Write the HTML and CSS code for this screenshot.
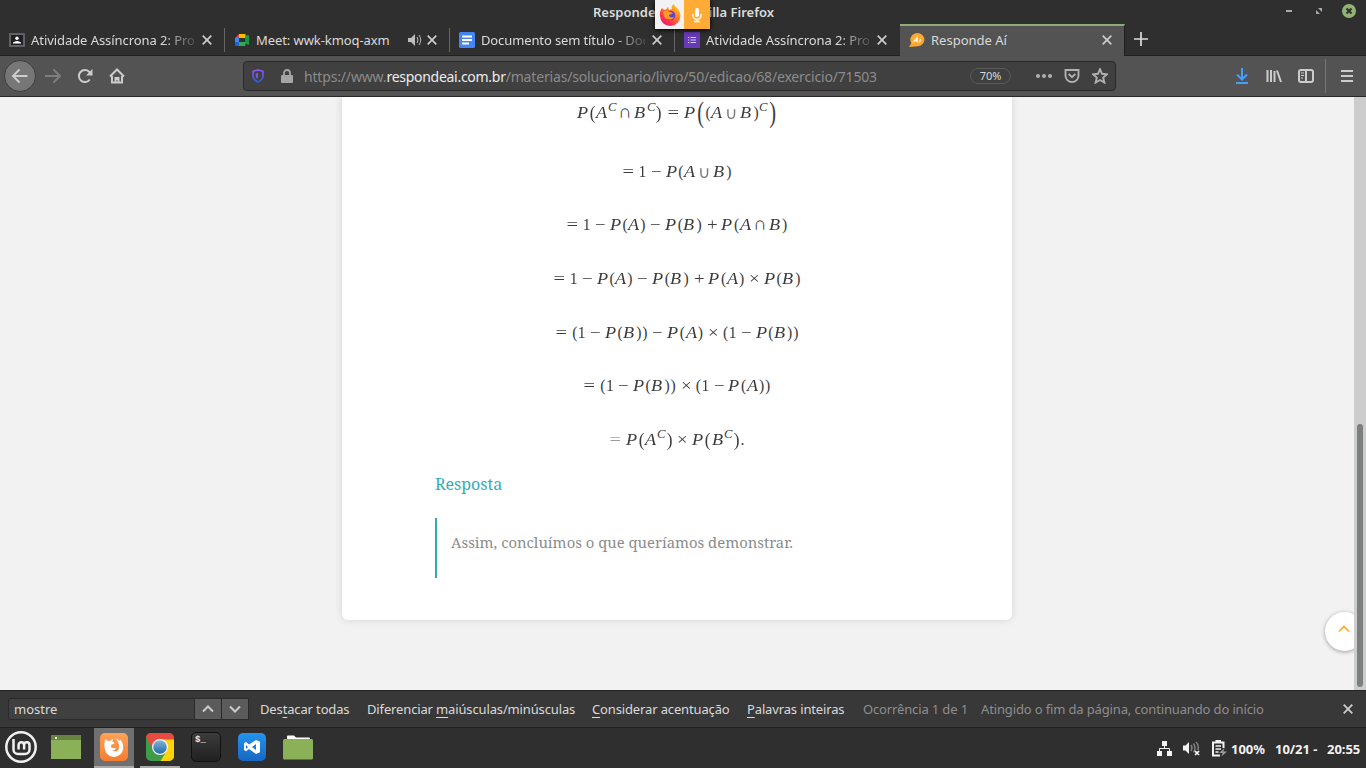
FILE: index.html
```html
<!DOCTYPE html>
<html lang="pt-BR">
<head>
<meta charset="utf-8">
<title>Responde Aí - Mozilla Firefox</title>
<link rel="stylesheet" href="styles.css">
</head>
<body>
<header class="titlebar">
  <span class="title">Responde Aí - Mozilla Firefox</span>
  <div class="sharing">
    <span class="share-fx"><svg width="22" height="22" viewBox="0 0 22 22"><defs><linearGradient id="fx" x1="1" y1="0" x2="0.2" y2="1"><stop offset="0" stop-color="#ffe62e"/><stop offset=".4" stop-color="#ff8a22"/><stop offset=".75" stop-color="#ff3647"/><stop offset="1" stop-color="#e31587"/></linearGradient></defs><path d="M3 4l2 2 2-.4L9 3l1 3 3-1c-1-2 0-4 2-5 0 3 6 4 6.500 11.500A10 10 0 0 1 1 12C.5 9 1.500 6 3 4z" fill="url(#fx)"/><circle cx="11.500" cy="11.500" r="4.800" fill="#6542c8"/><path d="M4 8c3-2 5-1 7 0l3 1c-1 1.500-3 1-4 2 0 2 2 3 5 2-2 4-9 3-10-1z" fill="#ff9b22"/></svg></span>
    <span class="share-mic"><svg width="10" height="16" viewBox="0 0 10 16"><rect x="3" y="1" width="4" height="9" rx="2" fill="#fff"/><path d="M1 7v1.500a4 4 0 0 0 8 0V7M5 12v2.500M2 14.500h6" fill="none" stroke="#fff" stroke-width="1.400"/></svg></span>
  </div>
  <div class="winctl">
    <svg width="8" height="16" viewBox="0 0 8 16"><path d="M1 8h6" stroke="#aaa" stroke-width="2"/></svg>
    <svg width="8" height="16" viewBox="0 0 8 16"><path d="M3 5h4v4zM1 7v4h4z" fill="#aaa"/></svg>
    <svg width="14" height="16" viewBox="0 0 14 16"><circle cx="7" cy="8" r="7" fill="#92b372"/><path d="M4.500 5.500l5 5M9.500 5.500l-5 5" stroke="#2f2f2f" stroke-width="2"/></svg>
  </div>
</header>

<nav class="tabs">
  <div class="tab"><svg class="fav" viewBox="0 0 16 16"><rect y="1" width="16" height="14" rx="1" fill="#5f6368"/><rect x="2" y="3" width="12" height="10" fill="#202124"/><circle cx="8" cy="6.300" r="1.700" fill="#fff"/><path d="M4 11.500V10.500Q8 7.500 12 10.500V11.500z" fill="#fff"/></svg><span class="tabtext fade t1">Atividade Assíncrona 2: Pro</span><svg class="close" viewBox="0 0 10 10"><path d="M.7.7l8.600 8.600M9.300.7L.7 9.300"/></svg></div>
  <div class="tab"><svg class="fav" viewBox="0 0 16 16"><path d="M1 6l4-4v4z" fill="#ea4335"/><path d="M5 2h6.500v4H5z" fill="#fbbc04"/><path d="M1 6h4v4H1z" fill="#4285f4"/><path d="M1 10h4v4H2q-1 0-1-1z" fill="#1967d2"/><path d="M5 10h6.500V4l3-1v10l-3-2v2.500L11 14H5z" fill="#34a853"/><path d="M11.500 6L15 3v10l-3.500-3z" fill="#0f9d43"/></svg><span class="tabtext meet">Meet: wwk-kmoq-axm</span><svg class="sound" viewBox="0 0 14 14"><path d="M0 5h3l4-4v12L3 9H0z" fill="#bcbcbc"/><path d="M9 4q2 3 0 6M11 2q3.500 5 0 10" fill="none" stroke="#bcbcbc"/></svg><svg class="close" viewBox="0 0 10 10"><path d="M.7.7l8.600 8.600M9.300.7L.7 9.300"/></svg></div>
  <div class="tab"><svg class="fav" viewBox="0 0 16 16"><rect width="16" height="16" rx="1.500" fill="#4285f4"/><path d="M3 4.500h10M3 8h10M3 11.500h7" stroke="#fff" stroke-width="2"/></svg><span class="tabtext fade t3">Documento sem título - Doc</span><svg class="close" viewBox="0 0 10 10"><path d="M.7.7l8.600 8.600M9.300.7L.7 9.300"/></svg></div>
  <div class="tab"><svg class="fav" viewBox="0 0 16 16"><rect width="16" height="16" fill="#673ab7"/><path d="M6.500 5.500H12M6.500 8H12M6.500 10.500H12M4 5.500h1.300M4 8h1.300M4 10.500h1.300" stroke="#d5c8ee"/></svg><span class="tabtext fade t1">Atividade Assíncrona 2: Pro</span><svg class="close" viewBox="0 0 10 10"><path d="M.7.7l8.600 8.600M9.300.7L.7 9.300"/></svg></div>
  <div class="tab active"><svg class="fav" viewBox="0 0 16 16"><path d="M0 15L2.300 11A7 6.700 0 1 1 9 14.300z" fill="#ffa62f"/><path d="M4 10.500L8 5.500 8.500 10.500M6 8.700h2.500M10.500 10.500l1-3.500" fill="none" stroke="#fff" stroke-width="1.200"/></svg><span class="tabtext t5">Responde Aí</span><svg class="close" viewBox="0 0 10 10"><path d="M.7.7l8.600 8.600M9.300.7L.7 9.300"/></svg></div>
  <svg class="newtab" viewBox="0 0 14 14"><path d="M7 0v14M0 7h14" stroke="#ddd" stroke-width="1.700"/></svg>
</nav>

<div class="toolbar">
  <span class="back"><svg width="18" height="18" viewBox="0 0 18 18"><path d="M16.500 9H2.500M8.500 2.500L2 9l6.500 6.500" class="ln"/></svg></span>
  <svg class="ti dim" viewBox="0 0 16 16"><path d="M0 8h14.500M8.500 1.500L15 8l-6.500 6.500" class="ln"/></svg>
  <svg class="ti" viewBox="0 0 16 16"><path d="M12.800 11.500A6 6 0 1 1 12.200 3.800L14 6" class="ln"/><path d="M15.500 1v6.500H9z" fill="#ccc"/></svg>
  <svg class="ti" viewBox="0 0 16 16"><path d="M1 8.500l7-7 7 7M3 8v6.500h10V8" class="ln"/><path d="M5.500 15V9h5v6h-2v-3h-1v3z" fill="#ccc"/></svg>
  <div class="urlbar">
    <svg class="shield" viewBox="0 0 12 14"><path d="M6 1L11 2.300V7q-.3 4-5 6Q1.300 11 1 7V2.300z" fill="none" stroke="url(#sh)" stroke-width="1.600"/><path d="M6 3.800V10Q3.600 9 3.600 7V4.400z" fill="#7356e8"/><defs><linearGradient id="sh" x2="0" y2="1"><stop stop-color="#9059ff"/><stop offset="1" stop-color="#2a5bd7"/></linearGradient></defs></svg>
    <i class="vsep"></i>
    <svg class="lock" viewBox="0 0 12 14"><path d="M3 7V4a3 3 0 0 1 6 0v3" fill="none" stroke="#a5a5a5" stroke-width="1.800"/><rect y="6" width="12" height="8" rx="1" fill="#a5a5a5"/></svg>
    <span class="url">https://www.<b>respondeai.com.br</b>/materias/solucionario/livro/50/edicao/68/exercicio/71503</span>
    <span class="zoom">70%</span>
    <i class="vsep s2"></i>
    <svg class="dots" viewBox="0 0 16 4"><circle cx="2" cy="2" r="2"/><circle cx="8" cy="2" r="2"/><circle cx="14" cy="2" r="2"/></svg>
    <svg class="ui" viewBox="0 0 16 16"><path d="M1.500 2h13v5.500a6.500 6.500 0 0 1-13 0z"/><path d="M4.700 6L8 9.200 11.300 6"/></svg>
    <svg class="ui" viewBox="0 0 16 16"><path d="M8 1.200l2 4.600 5 .5-3.800 3.300 1.200 5L8 12l-4.400 2.600 1.200-5L1 6.300l5-.5z"/></svg>
  </div>
  <svg class="ti dl" viewBox="0 0 16 16"><path d="M8 0v11M3 6.500L8 11.500l5-5M2 15h12" fill="none" stroke="#459dff" stroke-width="2"/></svg>
  <svg class="ti lib" viewBox="0 0 16 16"><path d="M1.500 2v12M5 2v12M8.500 3v11M11 2.500L15 14" class="ln"/></svg>
  <svg class="ti side" viewBox="0 0 16 16"><rect x="1" y="2" width="14" height="12" rx="2" class="ln"/><path d="M8 2v12" class="ln"/><path d="M3 5h3M3 7.500h3M3 10h2" stroke="#ccc"/></svg>
  <i class="tsep"></i>
  <svg class="menu" viewBox="0 0 12 12"><path d="M0 1h12M0 6h12M0 11h12" class="ln"/></svg>
</div>

<main class="page">
  <section class="card">
    <div class="eq first"><i class="p">P</i><s class="big">(</s><i class="a">A</i><sup>C</sup><u>∩</u><i class="b">B</i><sup>C</sup><s class="big">)</s><em>=</em><i class="p">P</i><s class="huge">(</s><s>(</s><i class="a">A</i><u class="cup">∪</u><i class="b">B</i><s>)</s><sup>C</sup><s class="huge">)</s></div>
    <div class="eq"><em class="l">=</em><q>1</q><b>−</b><i class="p">P</i><s>(</s><i class="a">A</i><u class="cup">∪</u><i class="b">B</i><s>)</s></div>
    <div class="eq"><em class="l">=</em><q>1</q><b>−</b><i class="p">P</i><s>(</s><i class="a">A</i><s>)</s><b>−</b><i class="p">P</i><s>(</s><i class="b">B</i><s>)</s><b>+</b><i class="p">P</i><s>(</s><i class="a">A</i><u>∩</u><i class="b">B</i><s>)</s></div>
    <div class="eq"><em class="l">=</em><q>1</q><b>−</b><i class="p">P</i><s>(</s><i class="a">A</i><s>)</s><b>−</b><i class="p">P</i><s>(</s><i class="b">B</i><s>)</s><b>+</b><i class="p">P</i><s>(</s><i class="a">A</i><s>)</s><b>×</b><i class="p">P</i><s>(</s><i class="b">B</i><s>)</s></div>
    <div class="eq"><em class="l">=</em><s>(</s><q>1</q><b>−</b><i class="p">P</i><s>(</s><i class="b">B</i><s>)</s><s>)</s><b>−</b><i class="p">P</i><s>(</s><i class="a">A</i><s>)</s><b>×</b><s>(</s><q>1</q><b>−</b><i class="p">P</i><s>(</s><i class="b">B</i><s>)</s><s>)</s></div>
    <div class="eq"><em class="l">=</em><s>(</s><q>1</q><b>−</b><i class="p">P</i><s>(</s><i class="b">B</i><s>)</s><s>)</s><b>×</b><s>(</s><q>1</q><b>−</b><i class="p">P</i><s>(</s><i class="a">A</i><s>)</s><s>)</s></div>
    <div class="eq"><em class="l pale">=</em><i class="p">P</i><s class="big">(</s><i class="a">A</i><sup>C</sup><s class="big">)</s><b>×</b><i class="p">P</i><s class="big">(</s><i class="b">B</i><sup>C</sup><s class="big">)</s><span class="dot">.</span></div>
    <h2 class="answer">Resposta</h2>
    <p class="quote"><span>Assim, concluímos o que queríamos demonstrar.</span></p>
  </section>
  <div class="totop"><svg width="12" height="8" viewBox="0 0 12 8"><path d="M1 6.500l5-5 5 5" fill="none" stroke="#ffa52d" stroke-width="1.700"/></svg></div>
  <div class="scroll"><div class="thumb"></div></div>
</main>

<div class="findbar">
  <div class="field">mostre</div>
  <span class="fb"><svg width="12" height="8" viewBox="0 0 12 8"><path d="M1 6.500l5-5 5 5" class="ln"/></svg></span>
  <span class="fb"><svg width="12" height="8" viewBox="0 0 12 8"><path d="M1 1.500l5 5 5-5" class="ln"/></svg></span>
  <span class="f f1">Des<u>t</u>acar todas</span>
  <span class="f f2">Diferenciar <u>m</u>aiúsculas/minúsculas</span>
  <span class="f f3"><u>C</u>onsiderar acentuação</span>
  <span class="f f4"><u>P</u>alavras inteiras</span>
  <span class="f f5">Ocorrência 1 de 1</span>
  <span class="f f6">Atingido o fim da página, continuando do início</span>
  <svg class="close fclose" viewBox="0 0 10 10"><path d="M.7.7l8.600 8.600M9.300.7L.7 9.300"/></svg>
</div>

<footer class="panel">
  <div class="slot mint"><svg width="32" height="32" viewBox="0 0 32 32"><circle cx="16" cy="16" r="14.700" fill="none" stroke="#f1f1f1" stroke-width="2.500"/><path d="M8.500 8v10.500a4.500 4.500 0 0 0 4.500 4.500h7a4.500 4.500 0 0 0 4.500-4.500V14a2.700 2.700 0 0 0-5.400 0v4.500M19 14a2.700 2.700 0 0 0-5.400 0v4.500" fill="none" stroke="#f1f1f1" stroke-width="2.500"/></svg></div>
  <div class="slot files"><svg width="30" height="24" viewBox="0 0 30 24"><path d="M0 0h30v24H0z" fill="#8bb158"/><path d="M0 0h30v5H0z" fill="#668340"/><path d="M4 2h2v2H4z" fill="#fff"/></svg></div>
  <div class="slot on run"><svg width="30" height="30" viewBox="0 0 30 30"><defs><linearGradient id="or" x2="0" y2="1"><stop stop-color="#fba35a"/><stop offset="1" stop-color="#f57d31"/></linearGradient></defs><rect x="1" y="1" width="28" height="28" rx="5" fill="url(#or)"/><path d="M6.500 7l2.300 2 2.700-.3 2.300-2-.3 3 2.200 1.600-3.200 1.500-.7 2.200q2 1.800 4.700.8c.5 2-1.500 3-3.500 2.600 3 2 6.500.8 7-3 .4-3.500-.8-6.500-3.500-8.900q3 .7 4.500 3l.2-2q3.500 4 3 9A9.200 9.200 0 0 1 6 17.500Q4.500 12 6.500 7z" fill="#fff"/></svg></div>
  <div class="slot run"><svg width="30" height="30" viewBox="0 0 30 30"><defs><clipPath id="cc"><rect x="1" y="1" width="28" height="28" rx="5"/></clipPath><linearGradient id="bl" x2="0" y2="1"><stop stop-color="#82b4dc"/><stop offset="1" stop-color="#246ba8"/></linearGradient></defs><g clip-path="url(#cc)"><path d="M0 0h30v30H0z" fill="#3f9c47"/><path d="M15 7h15v23H15l6-10z" fill="#fdd20b"/><path d="M0 0h30v7.500H15L8.500 18 1 5z" fill="#e74a40"/></g><circle cx="15" cy="15" r="8" fill="#f5f5f5"/><circle cx="15" cy="15" r="6.800" fill="url(#bl)"/></svg></div>
  <div class="slot"><div class="term">$_</div></div>
  <div class="slot"><svg width="30" height="30" viewBox="0 0 30 30"><defs><linearGradient id="vs" x2="0" y2="1"><stop stop-color="#2494ef"/><stop offset="1" stop-color="#1667c2"/></linearGradient></defs><rect x="1" y="1" width="28" height="28" rx="5" fill="url(#vs)"/><path d="M19 8l4 1.700v10.600L19 22l-7-5-3 2.300-2-1.200V11l2-1 3 2.500zM19 12l-4 3 4 3zM9 13v4l2-2z" fill="#fff" fill-rule="evenodd"/></svg></div>
  <div class="slot folder"><svg width="30" height="25" viewBox="0 0 30 25"><path d="M4 4V1.500Q4 .5 5 .5h6l2 2h13q1 0 1 1V5H4z" fill="#fff"/><rect y="4" width="30" height="20.500" rx="1.500" fill="#8bb158"/></svg></div>
  <div class="tray">
    <svg class="net" width="15" height="15" viewBox="0 0 15 15"><path d="M5 0h5v5H5zM0 10h5v5H0zM10 10h5v5h-5z" fill="#f2f2f2"/><path d="M7.500 5v2.500M2.500 10V7.500h10V10" fill="none" stroke="#f2f2f2"/></svg>
    <svg class="vol" width="17" height="15" viewBox="0 0 17 15"><path d="M0 4.500h2.500L6 1v12L2.500 9.500H0z" fill="#f2f2f2"/><path d="M8 4q2 3 0 6M10.500 2.500q3 4.500 0 9M13 1q3 3 2 8" fill="none" stroke="#808080" stroke-width="1.500"/><path d="M12 10l4 4M16 10l-4 4" stroke="#fff" stroke-width="1.700"/></svg>
    <svg class="bat" width="15" height="17" viewBox="0 0 15 17"><path d="M8 15.500H1v-13h10.500V8M3.500 1h5.500" fill="none" stroke="#f2f2f2" stroke-width="2"/><path d="M3.500 6h5.500M3.500 9h5.500M3.500 12h3" stroke="#f2f2f2" stroke-width="1.500"/><path d="M12.500 8l-1 3.500H15l-5.500 5 1-3.500H7z" fill="#999"/></svg>
    <span class="pct">100%</span><span class="date">10/21 -</span><span class="clock">20:55</span>
  </div>
</footer>
</body>
</html>
```
FILE: styles.css
```css
* { box-sizing: border-box; }
body { margin: 0; width: 1366px; height: 768px; overflow: hidden; display: flex; flex-direction: column; background: #2f2f2f; font-family: "Noto Sans", "Open Sans", sans-serif; font-size: 13px; color: #dadada; }
svg { display: block; flex: none; }
span { white-space: nowrap; }
.ln { fill: none; stroke: #ccc; stroke-width: 2; }

.titlebar { height: 24px; flex: none; position: relative; display: flex; justify-content: center; padding-left: 1px; }
.title { font-weight: 600; line-height: 24px; letter-spacing: 0; color: #dcdcdc; }
.sharing { position: absolute; left: 655px; top: 0; z-index: 2; display: flex; height: 29px; box-shadow: 0 1px 5px #000; }
.share-fx, .share-mic { display: flex; align-items: center; justify-content: center; }
.share-fx { width: 29px; background: #f2f2f2; }
.share-mic { width: 26px; background: #ffab35; }
.winctl { position: absolute; right: 10px; top: 3px; display: flex; }
.winctl svg + svg { margin-left: 22px; }
.winctl svg + svg + svg { margin-left: 19px; }

.tabs { height: 32px; flex: none; display: flex; border-bottom: 1px solid #202020; }
.tab { width: 225px; height: 32px; flex: none; display: flex; align-items: center; padding: 0 13px 0 9px; background: linear-gradient(#666, #666) 224px 4px / 1px 24px no-repeat; }
.tab:nth-child(4) { background: none; }
.tab.active { background: #535353; border-top: 2px solid #92ab75; border-right: 1px solid #202020; padding: 0 12px 2px 9px; }
.fav { width: 16px; height: 16px; margin-right: 6px; }
.tabtext { flex: 1; line-height: 22px; }
.fade { flex: none; width: 164px; letter-spacing: -.12px; -webkit-mask-image: linear-gradient(90deg, #000 132px, transparent 170px); mask-image: linear-gradient(90deg, #000 132px, transparent 170px); }
.t1 { letter-spacing: -.06px; }
.meet { letter-spacing: -.08px; }
.fade + .close { margin-left: 7px; }
.close { width: 10px; height: 10px; fill: none; stroke: #ccc; stroke-width: 1.7; }
.sound { width: 14px; height: 14px; margin-right: 5px; }
.newtab { width: 14px; height: 14px; margin: 8px 0 0 9px; }

.toolbar { height: 41px; flex: none; background: #535353; border-bottom: 1px solid #282828; display: flex; align-items: center; padding-left: 4px; }
.back { width: 32px; height: 32px; border-radius: 50%; background: #777; border: 1px solid #3e3e3e; display: flex; align-items: center; justify-content: center; margin-right: 9px; }
.ti { width: 16px; height: 16px; margin-right: 16px; }
.dim { opacity: .35; }
.urlbar { width: 873px; height: 30px; margin-left: 102px; background: #404040; border: 1px solid #2a2a2a; border-radius: 4px; display: flex; align-items: center; padding-left: 8px; }
.shield { width: 12px; height: 14px; }
.vsep { width: 1px; height: 22px; background: #292929; margin-left: 8px; }
.lock { width: 12px; height: 14px; margin: 0 11px 0 9px; }
.url { width: 666px; flex: none; font-size: 14px; color: #8b8b8b; letter-spacing: -.17px; }
.url b { font-weight: 400; color: #ececec; letter-spacing: -.28px; }
.zoom { width: 41px; height: 16px; flex: none; border: 1px solid #595959; border-radius: 8px; font-size: 11px; line-height: 14px; text-align: center; }
.s2 { margin: 0 13px 0 12px; }
.dots { width: 16px; height: 4px; fill: #b0b0b0; margin-right: 12px; }
.ui { width: 16px; height: 16px; fill: none; stroke: #b0b0b0; stroke-width: 1.9; margin-right: 12px; }
.dl { margin-left: 118px; }
.side { margin-right: 11px; }
.tsep { width: 1px; height: 34px; background: #747474; }
.menu { width: 12px; height: 12px; margin-left: 15px; }

.page { height: 593px; flex: none; background: #f2f2f2; position: relative; overflow: hidden; display: flex; padding-left: 342px; }
.card { width: 670px; height: 523px; background: #fff; border-radius: 0 0 6px 6px; box-shadow: 0 0 9px rgba(0,0,0,.12); }
.eq { height: 53.6px; display: flex; justify-content: center; align-items: center; font-family: "Liberation Serif", serif; font-size: 15.7px; line-height: 20px; color: #3c3c3c; }
.eq.first { height: 32px; margin-bottom: 16px; }
.eq > * { flex: none; text-decoration: none; font-style: normal; font-weight: 400; display: block; text-align: center; }
.eq q { width: .5em; quotes: none; transform: scaleY(1.04); }
.eq > i { font-style: italic; text-align: left; transform: scale(1.16, 1.05); transform-origin: left; }
.eq .p { width: .781em; }
.eq .a { width: .75em; }
.eq .b { width: .809em; }
.eq s { width: .389em; transform: translateY(-1px) scaleY(1.1); }
.eq s.big { width: .458em; transform: scale(1.1, 1.25); }
.eq s.huge { width: .597em; transform: translateY(-1px) scale(1.3, 1.9); }
.eq em { width: .667em; margin: 0 .333em; transform: scaleX(1.3); }
.eq em.l { margin-left: .055em; }
.eq .pale { opacity: .5; }
.eq b { width: .667em; margin: 0 .277em; transform: scaleX(1.2); }
.eq u { width: .667em; margin: 0 .222em; font-family: "DejaVu Sans"; font-weight: 200; transform: translate(-1px, -1px) scale(1.2); }
.eq u.cup { color: #7a7a7a; transform: scale(1.1); }
.eq sup { width: .79em; font-size: 11px; font-style: italic; line-height: 12px; transform: translateY(-6px) scale(1.15, 1.05); }
.eq .dot { width: .278em; }
.answer { margin: 5px 0 0 93px; font: 400 16px/24px "Noto Serif", "Droid Serif", "DejaVu Serif Condensed", "DejaVu Serif", serif; color: #35adb0; }
.quote { margin: 22px 0 0 93px; height: 60px; border-left: 2px solid #36a9ac; padding-left: 14px; font: 14.83px/48px "Noto Serif", "Droid Serif", "DejaVu Serif Condensed", "DejaVu Serif", serif; color: #8c8c8c; }
.totop { position: absolute; left: 1325px; top: 515px; width: 39px; height: 39px; border-radius: 50%; background: #fff; box-shadow: 0 1px 4px rgba(0,0,0,.35); padding: 13px 0 0 13px; }
.scroll { position: absolute; right: 0; top: 0; width: 12px; height: 593px; background: #cdcdcd; }
.thumb { width: 6px; height: 263px; margin: 327px 0 0 3px; border-radius: 3px; background: #7c7f80; }

.findbar { height: 38px; flex: none; background: #383838; border-top: 1px solid #242424; border-bottom: 1px solid #202020; display: flex; align-items: center; padding-left: 8px; }
.field { width: 187px; height: 22px; border: 1px solid #2a2a2a; background: #404040; line-height: 20px; padding-left: 5px; border-radius: 3px 0 0 3px; }
.fb { width: 27px; height: 22px; border: 1px solid #2a2a2a; border-left: 0; background: #5b5b5b; display: flex; align-items: center; justify-content: center; }
.f { flex: none; line-height: 20px; letter-spacing: -.14px; }
.f u { text-underline-offset: 3px; }
.f1 { margin-left: 11px; width: 107px; }
.f2 { width: 225px; }
.f3 { width: 155px; }
.f4 { width: 116px; }
.f5 { width: 118px; color: #8e8e8e; }
.f6 { width: 362px; color: #8e8e8e; }
.fclose { stroke-width: 1.8; }

.panel { flex: 1; display: flex; }
.slot { width: 40px; margin-right: 6px; display: flex; align-items: center; justify-content: center; border-bottom: 2px solid transparent; }
.mint { width: 42px; margin-right: 4px; }
.files { margin-right: 8px; }
.slot.run { border-color: #aaa; }
.slot.on { background: #707070; }
.term { width: 30px; height: 30px; border: 1px solid #111; border-radius: 5px; background: linear-gradient(#3c3c3c, #202020); font: bold 9px/12px "Liberation Mono", monospace; color: #eee; padding: 1px 0 0 3px; }
.tray { margin-left: auto; display: flex; align-items: center; padding-right: 4px; color: #f2f2f2; font-weight: 700; }
.tray span { letter-spacing: -.05px; padding-top: 1px; }
.vol { margin-left: 11px; }
.bat { margin: 0 4px 0 12px; }
.pct { width: 44px; }
.date { width: 52px; }
.clock { width: 35px; }
```
